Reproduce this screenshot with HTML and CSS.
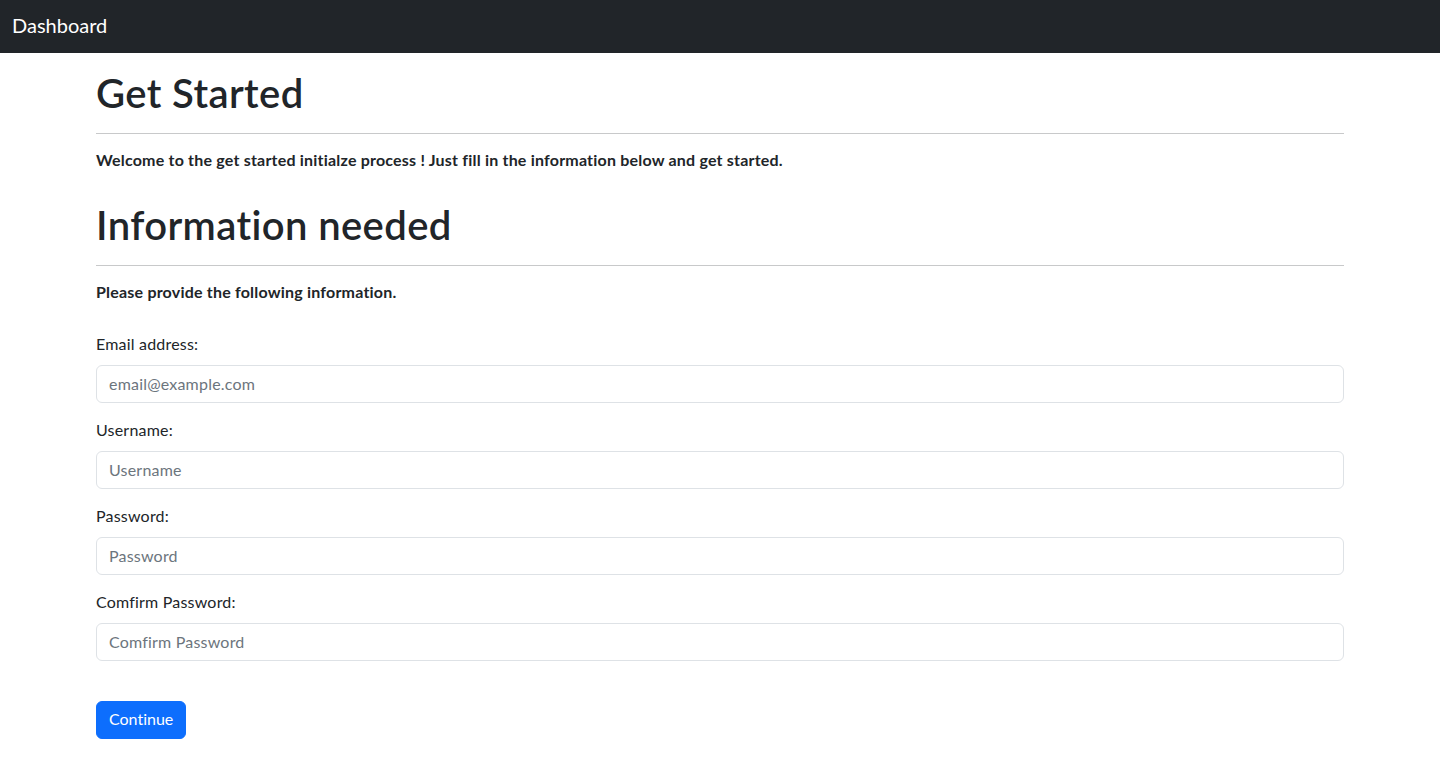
FILE: index.html
```html
<!DOCTYPE html>
<html lang="en">
<head>
<meta charset="utf-8">
<title>Get Started</title>
<link rel="stylesheet" href="styles.css">
</head>
<body>
<nav class="navbar">
  <a class="brand" href="#">Dashboard</a>
</nav>
<main class="container">
  <h1 class="title first">Get Started</h1>
  <hr class="divider">
  <p class="lead-text"><b>Welcome to the get started initialze process ! Just fill in the information below and get started.</b></p>
  <h1 class="title second">Information needed</h1>
  <hr class="divider">
  <p class="lead-text"><b>Please provide the following information.</b></p>
  <form class="form">
    <div class="field">
      <label class="label" for="email">Email address:</label>
      <input class="input" id="email" type="email" placeholder="email@example.com">
    </div>
    <div class="field">
      <label class="label" for="username">Username:</label>
      <input class="input" id="username" type="text" placeholder="Username">
    </div>
    <div class="field">
      <label class="label" for="password">Password:</label>
      <input class="input" id="password" type="password" placeholder="Password">
    </div>
    <div class="field">
      <label class="label" for="confirm">Comfirm Password:</label>
      <input class="input" id="confirm" type="password" placeholder="Comfirm Password">
    </div>
    <button class="btn-primary" type="button">Continue</button>
  </form>
</main>
</body>
</html>
```
FILE: styles.css
```css
* { box-sizing: border-box; }
html, body { margin: 0; padding: 0; }
body {
  font-family: Lato, "Noto Sans", sans-serif;
  font-size: 16px;
  line-height: 1.5;
  color: #212529;
  background: #fff;
  font-variant-ligatures: none;
  letter-spacing: 0.2px;
}
.navbar {
  height: 53px;
  background: #212529;
  display: flex;
  align-items: center;
  padding: 0 12px;
}
.brand {
  color: #fff;
  text-decoration: none;
  font-size: 20px;
  line-height: 30px;
  margin-top: -3px;
  letter-spacing: 0;
}
.container {
  margin: 0 96px;
}
.title {
  font-size: 40px;
  font-weight: 600;
  line-height: 1.2;
  margin: 0;
  letter-spacing: 0.4px;
}
.title.first { margin-top: 16px; }
.title.second { margin-top: 27px; }
.divider {
  border: 0;
  border-top: 1px solid #c8c9ca;
  margin: 16px 0;
}
.lead-text {
  margin: 0 0 16px;
  line-height: 20px;
  padding-bottom: 4px;
}
.lead-text b { font-weight: 700; }
.form {
  margin-top: 27px;
}
.field {
  margin-bottom: 16px;
}
.label {
  display: block;
  margin-bottom: 8px;
  line-height: 22px;
  padding-bottom: 2px;
}
.input {
  display: block;
  width: 100%;
  height: 38px;
  padding: 5px 12px 7px;
  font: inherit;
  letter-spacing: inherit;
  color: #212529;
  border: 1px solid #dee2e6;
  border-radius: 6px;
  background: #fff;
}
.input::placeholder { color: #6c757d; }
.btn-primary {
  margin-top: 24px;
  font: inherit;
  letter-spacing: 0;
  color: #fff;
  background: #0d6efd;
  border: 1px solid #0d6efd;
  border-radius: 6px;
  padding: 5px 12px 7px;
  height: 38px;
  cursor: pointer;
}
```
